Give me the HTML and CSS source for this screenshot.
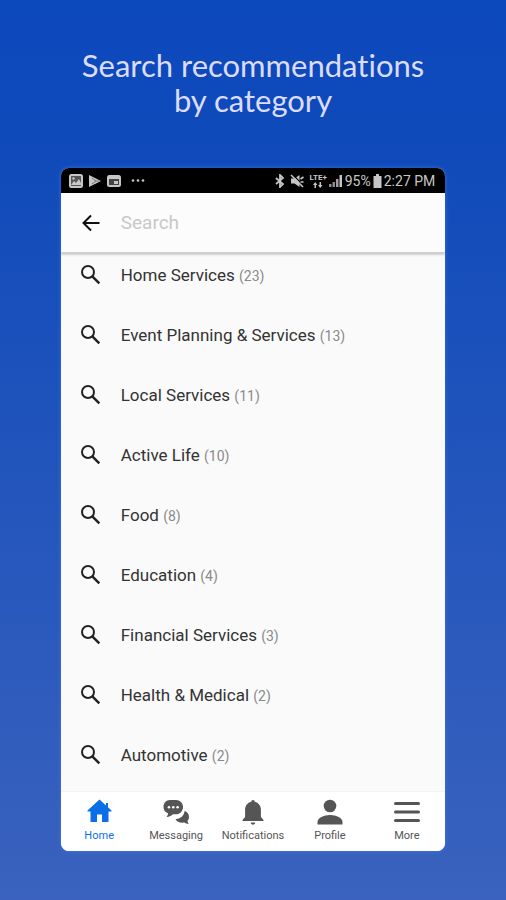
FILE: index.html
```html
<!DOCTYPE html>
<html lang="en">
<head>
<meta charset="utf-8">
<meta name="viewport" content="width=device-width, initial-scale=1">
<title>Search recommendations by category</title>
<link rel="stylesheet" href="styles.css">
</head>
<body>
<svg class="sprite" aria-hidden="true">
  <symbol id="search" viewBox="0 0 24 24"><circle cx="9" cy="9" r="6" fill="none" stroke="currentColor" stroke-width="2"/><path d="M13.300 13.300l7 7" stroke="currentColor" stroke-width="2.500"/></symbol>
</svg>
<main class="page">
  <h1 class="headline">Search recommendations<br>by category</h1>
  <section class="phone">
    <div class="status">
      <div class="status-group status-left">
        <svg width="14" height="14" viewBox="0 0 14 14"><rect x="1" y="1" width="12" height="12" rx="1.5" fill="#555" stroke="currentColor" stroke-width="2"/><path d="M2 11l3-4 2 2 3-4 3 6z" fill="currentColor"/><circle cx="4.5" cy="4.5" r="1.2" fill="currentColor"/></svg>
        <svg width="14" height="14" viewBox="0 0 14 14"><path d="M1 1l12 6L1 13z" fill="currentColor"/><path d="M4 4l4 3-4 3M8 7h3" fill="none" stroke="#777"/></svg>
        <svg width="14" height="14" viewBox="0 0 14 14"><rect x="1" y="2" width="12" height="10" rx="1.5" fill="#444" stroke="currentColor" stroke-width="2"/><path d="M2 4h10" stroke="currentColor" stroke-width="2"/><path d="M7 7h4v3H7z" fill="currentColor"/></svg>
        <svg class="dots" width="16" height="14" viewBox="0 0 16 14" fill="currentColor"><circle cx="3" cy="6.500" r="1.300"/><circle cx="8" cy="6.500" r="1.300"/><circle cx="13" cy="6.500" r="1.300"/></svg>
      </div>
      <div class="status-group status-right">
        <svg width="10" height="14" viewBox="0 0 10 14"><path d="M1 4l7 6-3 3V1l3 3-7 6" fill="none" stroke="currentColor" stroke-width="1.8"/></svg>
        <svg class="mute" width="14" height="14" viewBox="0 0 14 14"><path d="M1 4.500h3.500L9.500 1v12l-5-3.500H1z" fill="currentColor"/><path d="M2 0l12 12" stroke="#000" stroke-width="1.300"/><path d="M1 1l12 12M10.500 5l3-2M10.500 8h3" stroke="currentColor" stroke-width="1.600"/></svg>
        <span class="network">LTE+<svg width="10" height="6" viewBox="0 0 10 6" fill="currentColor"><path d="M0 3l2.200-3 2.200 3H3v3H1.500V3zM5 3h1.500V0H8v3h1.500L7.200 6z"/></svg></span>
        <svg width="14" height="14" viewBox="0 0 14 14" fill="currentColor"><path opacity=".7" d="M0 10h2.500v3H0zM3.500 8H6v5H3.500z"/><path opacity=".8" d="M7 5h2.500v8H7z"/><path d="M10.500 1H13v12h-2.500z"/></svg>
        <span>95%</span>
        <svg width="9" height="14" viewBox="0 0 9 14"><path d="M3 0h3v2h2.500v12h-8V2H3z" fill="currentColor"/></svg>
        <span>2:27 PM</span>
      </div>
    </div>
    <form class="searchbar">
      <button class="back" type="button" aria-label="Back"><svg width="24" height="24" viewBox="0 0 24 24"><path d="M20.500 12H5M12 4.500L4.500 12l7.500 7.500" fill="none" stroke="currentColor" stroke-width="2"/></svg></button>
      <input class="field" type="text" placeholder="Search" aria-label="Search">
    </form>
    <ul class="list">
      <li><a class="row" href="#"><svg class="glass"><use href="#search"/></svg><span>Home Services <small>(23)</small></span></a></li>
      <li><a class="row" href="#"><svg class="glass"><use href="#search"/></svg><span>Event Planning &amp; Services <small>(13)</small></span></a></li>
      <li><a class="row" href="#"><svg class="glass"><use href="#search"/></svg><span>Local Services <small>(11)</small></span></a></li>
      <li><a class="row" href="#"><svg class="glass"><use href="#search"/></svg><span>Active Life <small>(10)</small></span></a></li>
      <li><a class="row" href="#"><svg class="glass"><use href="#search"/></svg><span>Food <small>(8)</small></span></a></li>
      <li><a class="row" href="#"><svg class="glass"><use href="#search"/></svg><span>Education <small>(4)</small></span></a></li>
      <li><a class="row" href="#"><svg class="glass"><use href="#search"/></svg><span>Financial Services <small>(3)</small></span></a></li>
      <li><a class="row" href="#"><svg class="glass"><use href="#search"/></svg><span>Health &amp; Medical <small>(2)</small></span></a></li>
      <li><a class="row" href="#"><svg class="glass"><use href="#search"/></svg><span>Automotive <small>(2)</small></span></a></li>
    </ul>
    <nav class="tabs">
      <a class="tab active" href="#"><svg width="28" height="28" viewBox="0 0 28 28"><path d="M14.500 2.500L2.500 13.500v1H5.500v10.500H12v-7.500h5v7.500h6.500V14.500h3v-1L23 10.300V6h-2v2.500z" fill="currentColor"/></svg>Home</a>
      <a class="tab" href="#"><svg width="28" height="28" viewBox="0 0 28 28"><path d="M22.500 14c2.500.5 4.500 2.800 4.500 6 0 1.500-.5 2.700-1.500 3.700.1 1.200.5 2.200 1.300 3.200-2 0-3.500-.7-4.300-1.400-4.500.6-8.200-1-9-3.600 5 .3 8.500-3.200 9-7.900z" fill="currentColor"/><path d="M8 3h6c4 0 7 3 7 7s-3 7.300-7 7.300h-3c-1.500 1.500-3.500 2.600-6.500 2.600 1-1 1.500-2.400 1.500-3.600-3-1-4.500-3.300-4.500-6.300C1.500 6 4 3 8 3z" fill="currentColor"/><g fill="#fff"><circle cx="7" cy="10.200" r="1.300"/><circle cx="11.300" cy="10.200" r="1.300"/><circle cx="15.600" cy="10.200" r="1.300"/></g></svg>Messaging</a>
      <a class="tab" href="#"><svg width="28" height="28" viewBox="0 0 28 28" fill="currentColor"><path d="M14 3c1 0 1.700.7 1.700 1.800 4 1 6.200 4 6.200 8V20l2.600 3v1h-21v-1l2.600-3v-7.200c0-4 2.200-7 6.200-8C12.300 3.700 13 3 14 3z"/><path d="M11.800 25.500h4.400c0 1.300-1 2.200-2.200 2.200s-2.200-.9-2.200-2.200z"/></svg>Notifications</a>
      <a class="tab" href="#"><svg width="28" height="28" viewBox="0 0 28 28" fill="currentColor"><circle cx="14" cy="9" r="6.300"/><path d="M1.500 27.500V25c0-4 6-7 12.500-7s12.500 3 12.500 7v2.500z"/></svg>Profile</a>
      <a class="tab" href="#"><svg width="28" height="28" viewBox="0 0 28 28"><path d="M2.500 6.500h23M2.500 15h23M2.500 23.500h23" stroke="currentColor" stroke-width="3" stroke-linecap="round"/></svg>More</a>
    </nav>
  </section>
</main>
</body>
</html>
```
FILE: styles.css
```css
* { box-sizing: border-box; }
body {
  margin: 0;
  font-family: Roboto, "Liberation Sans", sans-serif;
}
.sprite { position: absolute; width: 0; height: 0; }
.page {
  min-height: 100vh;
  padding: 48px 12% 49px;
  background: linear-gradient(#0c49bd 0%, #0f4aba 15%, #3a62be 100%);
}
.headline {
  margin: 0 0 50px;
  color: #dcdcff;
  font: 400 31px/35px Lato, sans-serif;
  font-variant-ligatures: none;
  text-align: center;
  white-space: nowrap;
}
.phone {
  overflow: hidden;
  border-radius: 8px;
  background: #fafafa;
  box-shadow: 0 0 4px rgba(70, 125, 240, .7);
}
.status {
  display: flex;
  align-items: center;
  justify-content: space-between;
  height: 25px;
  padding: 0 10px 0 8px;
  background: #000;
  color: #c6c6c6;
  font-size: 14px;
}
.status-group { display: flex; align-items: center; white-space: nowrap; }
.status-left { gap: 5px; }
.dots { margin-left: 4px; }
.status-right { gap: 2px; }
.mute { margin: 0 3px; }
.network {
  display: flex;
  flex-direction: column;
  align-items: center;
  font-size: 8px;
  font-weight: 700;
  line-height: 8px;
}
.searchbar {
  position: relative;
  display: flex;
  align-items: center;
  gap: 18px;
  height: 60px;
  padding: 0 18px;
  border-bottom: 1px solid #d2d2d2;
  box-shadow: 0 1px 3px rgba(0, 0, 0, .3);
  background: #fcfcfc;
}
.back {
  display: flex;
  padding: 0;
  border: 0;
  background: none;
  color: #111;
}
.field {
  flex: 1;
  min-width: 0;
  padding: 0;
  border: 0;
  outline: 0;
  background: none;
  font: 400 19px/24px Roboto, sans-serif;
}
.field::placeholder { color: #c8c8c8; opacity: 1; }
.list {
  display: grid;
  gap: 36px;
  margin: 0;
  padding: 10px 18px 24px;
  list-style: none;
}
.row {
  display: flex;
  align-items: center;
  gap: 18px;
  color: #333;
  font-size: 17px;
  line-height: 24px;
  text-decoration: none;
}
.row small { color: #8a8a8a; font-size: 14px; line-height: 1; }
.glass { width: 24px; height: 24px; color: #222; }
.tabs {
  display: grid;
  grid-template-columns: repeat(5, 1fr);
  height: 60px;
  border-top: 1px solid #f3f3f3;
  background: #fff;
}
.tab {
  display: flex;
  flex-direction: column;
  align-items: center;
  gap: 4px;
  padding-top: 5px;
  color: #555;
  font-size: 11px;
  line-height: 14px;
  text-decoration: none;
}
.active { color: #0b70e8; }
```
